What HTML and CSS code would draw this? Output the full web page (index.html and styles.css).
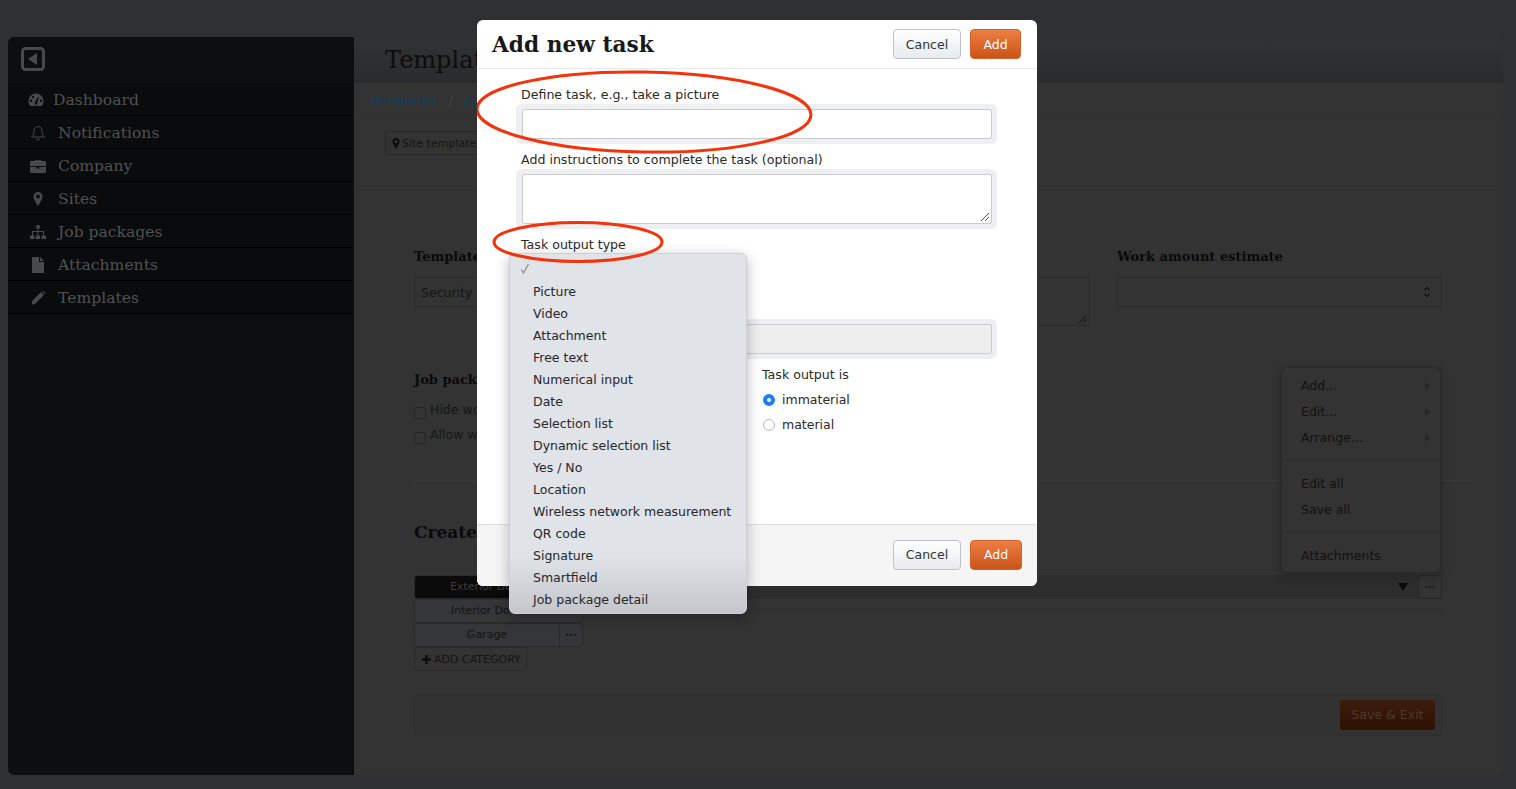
FILE: index.html
```html
<!DOCTYPE html>
<html>
<head>
    <title>Add new task</title>
    <link rel="stylesheet" href="styles.css">
</head>
<body>
    <div class="app">
        <div class="sidebar">
            <div class="side-top">
                <svg class="collapse" width="24" height="24" viewBox="0 0 24 24"><rect x="1.500" y="1.500" width="21" height="21" rx="3" fill="none" stroke="#48494b" stroke-width="3"/><path d="M16 6v12l-9-6z" fill="#48494b"/></svg>
            </div>
            <ul class="side-nav">
                <li class="first"><svg width="16" height="14" viewBox="0 0 16 14"><path fill-rule="evenodd" d="M8 0.5a7.6 7.6 0 0 0-7.6 7.6c0 1.900.7 3.700 1.900 5h11.400a7.500 7.500 0 0 0 1.900-5A7.600 7.600 0 0 0 8 0.500zM3 9a1.200 1.200 0 1 1 0-2.400 1.200 1.200 0 0 1 0 2.400zm2-3.700a1.200 1.200 0 1 1 0-2.400 1.200 1.200 0 0 1 0 2.400zm3.900 6.200a1.500 1.500 0 0 1-2-2l3-5.500.8.300zM13 9a1.200 1.200 0 1 1 0-2.400A1.200 1.200 0 0 1 13 9z"/></svg>Dashboard</li>
                <li><svg width="16" height="16" viewBox="0 0 16 16"><path d="M8 1.500c-2.700 0-4 2-4 4.500 0 3-1 4.500-2.500 6h13C13 10.500 12 9 12 6c0-2.500-1.300-4.500-4-4.500zM6.500 13.500a1.500 1.500 0 0 0 3 0" fill="none" stroke="#48494b" stroke-width="1"/></svg>Notifications</li>
                <li><svg width="16" height="14" viewBox="0 0 16 14"><path d="M5 2V1h6v1h3.500c.800 0 1.500.700 1.500 1.500V7H0V3.500C0 2.700.700 2 1.500 2zm1 0h4V1.800H6zM0 8h6.500v1.500h3V8H16v4.500c0 .800-.700 1.500-1.500 1.500h-13C.700 14 0 13.300 0 12.500z"/></svg>Company</li>
                <li><svg width="16" height="14" viewBox="0 0 16 14"><path fill-rule="evenodd" d="M8 0a4.500 4.500 0 0 0-4.500 4.500C3.500 7.500 8 14 8 14s4.500-6.500 4.500-9.500A4.500 4.500 0 0 0 8 0zm0 6.500a2 2 0 1 1 0-4 2 2 0 0 1 0 4z"/></svg>Sites</li>
                <li><svg width="16" height="14" viewBox="0 0 16 14"><path d="M6.200 0h3.600v3.500H8.500V6H14v4.500h2V14h-4.500v-3.500h1.500V7H8.500v3.500h1.700V14H5.800v-3.500h1.700V7H3v3.500h1.500V14H0v-3.500h2V6h5.500V3.500H6.200z"/></svg>Job packages</li>
                <li><svg width="16" height="16" viewBox="0 0 16 16"><path d="M2 0h7v5h5v11H2zM10 0l4 4h-4z"/></svg>Attachments</li>
                <li><svg width="16" height="14" viewBox="0 0 16 14"><path d="M11 1l3 3-8.500 8.500L1.500 14 2.500 9.500zM12 0l1-.500 2.500 2.500-.500 1z"/></svg>Templates</li>
            </ul>
        </div>

        <div class="main">
            <div class="main-header"><h1>Templat</h1></div>
            <div class="breadcrumb"><a>Templates</a><span>/</span><a>Job</a></div>
            <div class="toolbar">
                <span class="tool-btn"><svg width="8" height="11" viewBox="0 0 8 11"><path fill="#0d0d0d" fill-rule="evenodd" d="M4 0a3.600 3.600 0 0 0-3.600 3.600C.4 6 4 11 4 11s3.600-5 3.600-7.400A3.600 3.600 0 0 0 4 0zm0 5.200a1.600 1.600 0 1 1 0-3.200 1.600 1.600 0 0 1 0 3.200z"/></svg>Site templates</span>
            </div>

            <div class="fields">
                <div class="field">
                    <label class="slab-label">Template</label>
                    <div class="dark-input">Security</div>
                </div>
                <div class="field">
                    <div class="dark-input dark-area">
                        <svg class="grip" width="8" height="8" viewBox="0 0 8 8"><path d="M0 8l8-8M4 8l4-4" stroke="#111" fill="none"/></svg>
                    </div>
                </div>
                <div class="field">
                    <label class="slab-label">Work amount estimate</label>
                    <div class="dark-input spin-input">
                        <svg width="8" height="14" viewBox="0 0 8 14"><path d="M1.500 5L4 2.500 6.500 5M1.500 9L4 11.500 6.500 9" fill="none" stroke="#111" stroke-width="1.200"/></svg>
                    </div>
                </div>
            </div>

            <div class="options">
                <label class="slab-label">Job pack</label>
                <div class="check-row"><i class="check-box"></i>Hide wo</div>
                <div class="check-row"><i class="check-box"></i>Allow w</div>
            </div>

            <div class="create">
                <h2>Create j</h2>
                <div class="cat-area">
                    <div class="cat-list">
                        <div class="cat cat-active"><span>Exterior Do</span></div>
                        <div class="cat cat-left"><span>Interior Do</span></div>
                        <div class="cat"><span>Garage</span><b>•••</b></div>
                        <div class="cat-add"><svg width="9" height="9" viewBox="0 0 9 9"><path d="M3.300 0h2.400v3.300H9v2.400H5.700V9H3.300V5.700H0V3.300h3.300z" fill="#0d0d0d"/></svg>ADD CATEGORY</div>
                    </div>
                    <div class="cat-content">
                        <div class="cat-bar">
                            <svg width="10" height="8" viewBox="0 0 10 8"><path d="M0 0h10L5 8z" fill="#0a0a0a"/></svg>
                            <span class="more-btn">•••</span>
                        </div>
                    </div>
                </div>
            </div>

            <div class="save-bar"><span class="save-btn">Save &amp; Exit</span></div>

            <div class="context-menu">
                <div class="ctx-group">
                    <div class="ctx-item">Add...<i></i></div>
                    <div class="ctx-item">Edit...<i></i></div>
                    <div class="ctx-item">Arrange...<i></i></div>
                </div>
                <div class="ctx-group">
                    <div class="ctx-item">Edit all</div>
                    <div class="ctx-item">Save all</div>
                </div>
                <div class="ctx-group">
                    <div class="ctx-item">Attachments</div>
                </div>
            </div>
        </div>
    </div>

    <div class="modal">
        <div class="modal-header">
            <h3>Add new task</h3>
            <div class="btn-row">
                <button class="btn">Cancel</button>
                <button class="btn btn-orange">Add</button>
            </div>
        </div>
        <div class="modal-body">
            <label class="form-label">Define task, e.g., take a picture</label>
            <div class="halo"><div class="text-input"></div></div>
            <label class="form-label">Add instructions to complete the task (optional)</label>
            <div class="halo"><div class="text-input text-area">
                <svg class="grip" width="8" height="8" viewBox="0 0 8 8"><path d="M0 8l8-8M4 8l4-4" stroke="#555" fill="none"/></svg>
            </div></div>
            <label class="form-label">Task output type</label>
            <div class="select-gap"></div>
            <div class="halo"><div class="text-input input-disabled"></div></div>
            <div class="material">
                <label class="form-label">Task output is</label>
                <div class="radio-row"><i class="radio radio-on"></i>immaterial</div>
                <div class="radio-row"><i class="radio"></i>material</div>
            </div>
        </div>
        <div class="modal-footer">
            <button class="btn">Cancel</button>
            <button class="btn btn-orange btn-wide">Add</button>
        </div>

        <ul class="dropdown">
            <li class="checked"><svg width="10" height="11" viewBox="0 0 10 11"><path d="M1.500 6.500L3.500 10 8.500 1" fill="none" stroke="#8d8f93" stroke-width="1.300"/></svg></li>
            <li>Picture</li>
            <li>Video</li>
            <li>Attachment</li>
            <li>Free text</li>
            <li>Numerical input</li>
            <li>Date</li>
            <li>Selection list</li>
            <li>Dynamic selection list</li>
            <li>Yes / No</li>
            <li>Location</li>
            <li>Wireless network measurement</li>
            <li>QR code</li>
            <li>Signature</li>
            <li>Smartfield</li>
            <li>Job package detail</li>
        </ul>

        <svg class="marks" width="560" height="260" viewBox="0 0 560 260">
            <ellipse cx="167" cy="92" rx="167" ry="40" transform="rotate(1 167 92)"/>
            <ellipse cx="101" cy="222" rx="84" ry="19.500"/>
        </svg>
    </div>
</body>
</html>
```

FILE: styles.css
```css
* {
    margin: 0;
    padding: 0;
    box-sizing: border-box;
}

body {
    background: #2f3032;
    height: 789px;
    overflow: hidden;
    padding: 37px 13px 14px 8px;
    font-family: 'DejaVu Sans', sans-serif;
    font-size: 12.5px;
    color: #0e0e0e;
}

.app {
    display: grid;
    grid-template-columns: 346px 1fr;
    height: 738px;
    border-radius: 6px;
    overflow: hidden;
}

/* sidebar */
.sidebar {
    background: #0c0e0f;
}

.side-top {
    height: 46px;
    padding: 10px 13px;
}

.collapse {
    display: block;
}

.side-nav {
    list-style: none;
    width: 344px;
    font-family: 'DejaVu Serif', serif;
    font-size: 15.6px;
    color: #505153;
}

.side-nav li {
    height: 33px;
    display: flex;
    align-items: center;
    gap: 12px;
    padding: 1px 0 0 22px;
    border-bottom: 1px solid #000;
    background: #090b0c;
}

.side-nav li.first {
    gap: 9px;
    padding-left: 20px;
}

.side-nav svg {
    fill: #48494b;
    flex: none;
}

/* main */
.main {
    background: #333333;
    position: relative;
}

.main-header {
    height: 46px;
    padding: 9px 31px;
    background: linear-gradient(#313234, #2a2b2c);
}

h1 {
    font-family: 'DejaVu Serif', serif;
    font-weight: normal;
    font-size: 24px;
    color: #0d0d0d;
}

.breadcrumb {
    height: 35px;
    padding: 9px 15px;
    font-size: 13.5px;
    display: flex;
    gap: 11px;
    color: #163d54;
    border-bottom: 1px solid #303030;
}

.breadcrumb span {
    color: #444;
}

.toolbar {
    height: 73px;
    padding: 13px 31px;
    border-bottom: 1px solid #2e2e2e;
}

.tool-btn {
    display: inline-flex;
    align-items: center;
    gap: 2px;
    height: 24px;
    padding: 0 6px;
    border: 1px solid #272727;
    border-radius: 3px;
    font-size: 11px;
    color: #141414;
}

.fields {
    display: grid;
    grid-template-columns: 1fr 350px 325px;
    column-gap: 27px;
    padding: 57px 61px 0 60px;
    height: 180px;
}

.slab-label {
    display: block;
    font-family: 'DejaVu Serif', serif;
    font-weight: bold;
    font-size: 13px;
    line-height: 18px;
    color: #0a0a0a;
}

.dark-input {
    margin-top: 11px;
    height: 30px;
    padding: 7px 6px;
    border: 1px solid #2a2a2a;
    border-radius: 3px;
    font-size: 12.5px;
    color: #161616;
    position: relative;
}

.dark-area {
    margin-top: 29px;
    height: 49px;
}

.spin-input {
    display: flex;
    justify-content: flex-end;
    align-items: center;
    padding: 0 10px;
}

.grip {
    position: absolute;
    right: 2px;
    bottom: 2px;
}

.options {
    height: 109px;
    padding: 0 60px;
}

.options .slab-label {
    margin-bottom: 8px;
}

.check-row {
    display: flex;
    align-items: center;
    gap: 4px;
    height: 25px;
    font-size: 12.5px;
    color: #161616;
}

.check-box {
    width: 12px;
    height: 12px;
    margin-top: 6px;
    border: 1px solid #272727;
    border-radius: 2px;
}

.create {
    margin: 0 31px 0 60px;
    padding-top: 39px;
    border-top: 1px solid #3a3a3a;
    height: 214px;
}

h2 {
    font-family: 'DejaVu Serif', serif;
    font-size: 17px;
    line-height: 24px;
    color: #0a0a0a;
}

.cat-area {
    display: grid;
    grid-template-columns: 169px 859px;
    margin-top: 31px;
}

.cat-list {
    display: flex;
    flex-direction: column;
}

.cat {
    height: 24px;
    display: flex;
    border: 1px solid #2a2a2a;
    border-radius: 3px;
    background: #343638;
    font-size: 11px;
    line-height: 22px;
    color: #141414;
}

.cat span {
    flex: 1;
    text-align: center;
}

.cat-left span {
    flex: none;
    padding-left: 36px;
}

.cat b {
    width: 23px;
    text-align: center;
    font-size: 6px;
    border-left: 1px solid #2a2a2a;
}

.cat-active {
    background: #0b0b0b;
    color: #3c3c3c;
}

.cat-active span {
    flex: none;
    padding-left: 35px;
}

.cat-add {
    width: 113px;
    height: 24px;
    display: flex;
    align-items: center;
    gap: 3px;
    padding-left: 7px;
    border: 1px solid #2a2a2a;
    border-radius: 3px;
    font-size: 11px;
    color: #141414;
}

.cat-content {
    height: 35px;
    border-bottom: 1px solid #2c2c2c;
}

.cat-bar {
    height: 24px;
    display: flex;
    align-items: center;
    justify-content: flex-end;
    gap: 10px;
    background: #2d2d2d;
}

.more-btn {
    width: 24px;
    height: 24px;
    text-align: center;
    line-height: 22px;
    font-size: 6px;
    border: 1px solid #272727;
    border-radius: 3px;
    background: #333;
}

.save-bar {
    margin: 0 61px 0 60px;
    height: 42px;
    display: flex;
    justify-content: flex-end;
    align-items: center;
    padding-right: 6px;
    background: #323232;
    border: 1px solid #2e2e2e;
    border-radius: 3px;
}

.save-btn {
    width: 95px;
    height: 30px;
    line-height: 30px;
    text-align: center;
    border-radius: 3px;
    background: linear-gradient(#3d1c0b, #2e1204);
    color: #4c3a2e;
    font-size: 12.5px;
}

.context-menu {
    position: absolute;
    top: 330px;
    left: 927px;
    width: 160px;
    height: 206px;
    background: #333;
    border: 1px solid #2a2a2a;
    border-radius: 6px;
    box-shadow: 0 3px 10px rgba(0, 0, 0, 0.25);
    font-size: 12.5px;
    color: #121212;
}

.ctx-group {
    padding: 5px 0 9px;
    border-bottom: 1px solid #2c2c2c;
}

.ctx-group:last-child {
    border-bottom: none;
}

.ctx-group + .ctx-group {
    padding-top: 10px;
}

.ctx-item {
    height: 26px;
    line-height: 26px;
    padding: 0 10px 0 19px;
    display: flex;
    justify-content: space-between;
    align-items: center;
}

.ctx-item i {
    border-left: 5px solid #272727;
    border-top: 4px solid transparent;
    border-bottom: 4px solid transparent;
}

/* modal */
.modal {
    position: absolute;
    top: 20px;
    left: 477px;
    width: 560px;
    height: 566px;
    background: #fff;
    border-radius: 6px;
    display: flex;
    flex-direction: column;
    color: #222;
}

.modal-header {
    height: 49px;
    flex: none;
    display: flex;
    justify-content: space-between;
    padding: 9px 16px 0 15px;
    border-bottom: 1px solid #e8e8e8;
}

h3 {
    font-family: 'DejaVu Serif', serif;
    font-size: 21.7px;
    line-height: 30px;
    padding-top: 1px;
    color: #181818;
}

.btn-row {
    display: flex;
    gap: 9px;
}

.btn {
    width: 68px;
    height: 30px;
    border: 1px solid #bcc3c8;
    border-radius: 4px;
    background: linear-gradient(#fff, #e6ebef);
    font-family: 'DejaVu Sans', sans-serif;
    font-size: 12.5px;
    color: #333;
}

.btn-orange {
    width: 51px;
    border: 1px solid #d2622a;
    background: linear-gradient(#ee7f44, #cb5318);
    color: #fff;
}

.btn-wide {
    width: 52px;
}

.modal-body {
    flex: 1;
    padding: 18px 40px 0 39px;
    position: relative;
}

.form-label {
    display: block;
    padding-left: 5px;
    font-size: 12.6px;
    line-height: 16px;
    color: #2a2a2a;
}

.halo {
    margin: 1px 0 8px;
    padding: 5px 5px 5px 6px;
    background: #eeeff1;
    border-radius: 6px;
}

.text-input {
    height: 30px;
    background: #fff;
    border: 1px solid #c9cbce;
    border-radius: 2px;
    position: relative;
}

.text-area {
    height: 50px;
}

.input-disabled {
    background: #eeeeee;
}

.select-gap {
    height: 65px;
}

.material {
    margin-left: 241px;
}

.radio-row {
    display: flex;
    align-items: center;
    gap: 7px;
    height: 25px;
    margin-top: 4px;
    margin-bottom: -4px;
    padding-left: 6px;
    font-size: 12.5px;
    color: #2a2a2a;
}

.radio {
    width: 12px;
    height: 12px;
    border: 1px solid #b9b9b9;
    border-radius: 50%;
    background: #fff;
}

.radio-on {
    border: 4px solid #1a7ff5;
}

.modal-footer {
    height: 62px;
    flex: none;
    display: flex;
    justify-content: flex-end;
    align-items: center;
    gap: 9px;
    padding: 0 15px 2px 0;
    background: #f5f5f5;
    border-top: 1px solid #dedede;
    border-radius: 0 0 6px 6px;
}

.dropdown {
    position: absolute;
    top: 233px;
    left: 32px;
    width: 238px;
    height: 361px;
    padding-top: 5px;
    list-style: none;
    background: linear-gradient(#e0e3e8 0, #e0e3e8 84%, #c3c6cb 100%);
    border: 1px solid #cdd0d4;
    border-radius: 6px;
    box-shadow: 0 4px 14px rgba(0, 0, 0, 0.28);
    font-size: 12.5px;
    color: #26272a;
}

.dropdown li {
    height: 22px;
    line-height: 22px;
    padding-left: 23px;
}

.dropdown li.checked {
    padding-left: 10px;
    display: flex;
    align-items: center;
}

.dropdown li.checked svg {
    margin-top: -4px;
}

.marks {
    position: absolute;
    top: 0;
    left: 0;
    pointer-events: none;
}

.marks ellipse {
    fill: none;
    stroke: #f4330c;
    stroke-width: 3;
}
```
